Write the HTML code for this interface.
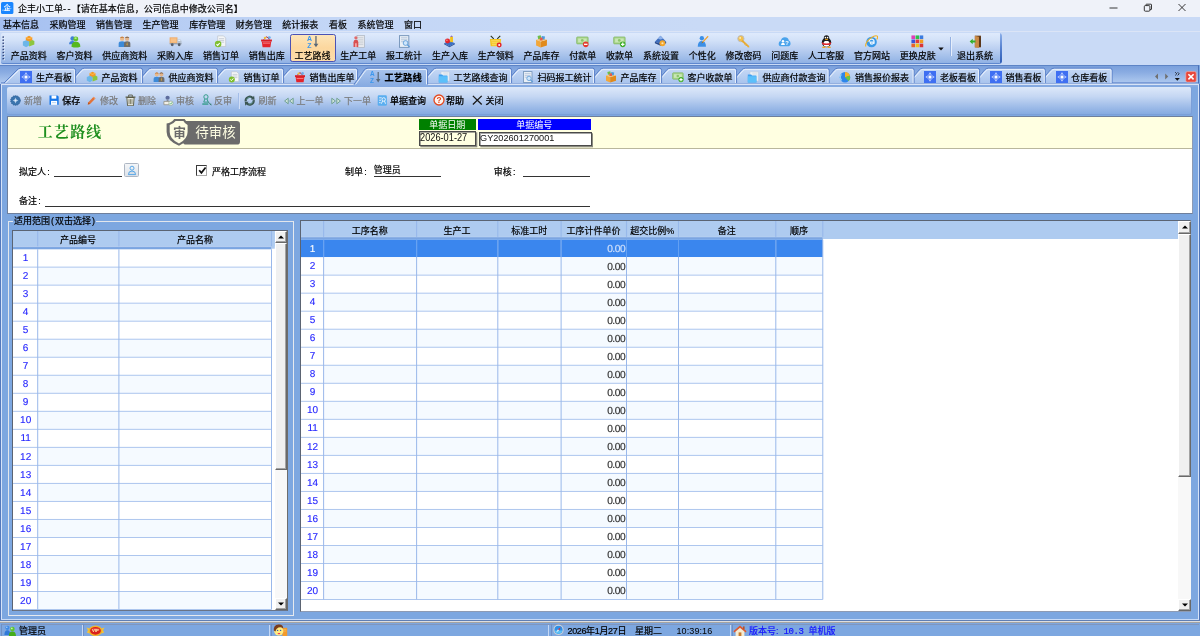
<!DOCTYPE html>
<html lang="zh-CN"><head><meta charset="utf-8"><title>企丰小工单</title>
<style>
*{box-sizing:border-box;margin:0;padding:0}
html,body{width:1200px;height:636px;overflow:hidden}
body{will-change:transform}
body{position:relative;background:#7da7e0;font:9px/11px 'Liberation Sans','Noto Sans CJK SC',sans-serif;color:#000}
.a{position:absolute}
.t{position:absolute;white-space:nowrap;line-height:11px}
.t,.tbi{-webkit-text-stroke:0.2px currentColor}
#title{left:0;top:0;width:1200px;height:17px;background:#eff2f9}
#menu{left:0;top:16.8px;width:1200px;height:15px;background:linear-gradient(to right,#a4bff0 0,#b4cbf3 140px,#c3d6f6 330px,#c9daf6 700px)}
#tbrow{left:0;top:31px;width:1200px;height:34px;background:#c9daf6;border-top:1px solid #dbe4f6}
#tb{left:1px;top:32.6px;width:1000.8px;height:31px;border-radius:2px 3px 3px 2px;background:linear-gradient(#dfeafc 0%,#d2e1f8 25%,#bcd0f1 52%,#a4c0ea 78%,#90b1e4 100%);border-bottom:1.2px solid #5f88cf;overflow:hidden}
#tb:after{content:'';position:absolute;right:0;top:0;width:1.8px;height:100%;background:linear-gradient(#8db0ea,#5580cf 50%,#2f5db6)}
.tbi{position:absolute;top:50.6px;text-align:center;white-space:nowrap;line-height:11px}
#tabrow{left:0;top:65px;width:1199px;height:19px;background:linear-gradient(#7aa0dc 0%,#8aace2 35%,#a3c0eb 75%,#b0c9ef 100%);border-top:1px solid #5d84c6;border-right:1px solid #4a70b8}
#acttb{left:6.6px;top:86.5px;width:1185px;height:28.2px;border-right:1px solid #7b9fd8;border-bottom:1px solid #7b9fd8;background:linear-gradient(#dde8f9 0%,#c5d7f3 35%,#9dbbe8 75%,#86abe1 100%);border-radius:2px}
.dis{color:#7a7a7a;font-weight:normal}
.en{color:#000;font-weight:500}
.gh{position:absolute;background:#aecbf0;border-right:1px solid #9dbbe8;text-align:center;line-height:17px;height:17px}
.gc{position:absolute;border-right:1px solid #a9c3ea;border-bottom:1px solid #a9c3ea}
.rn{color:#2a2aff;text-align:center;font-size:9.5px}
</style></head><body>

<div class="a" id="title"></div>
<svg class="a" style="left:1.3px;top:2px" width="12.4" height="12" viewBox="0 0 12.4 12"><rect x="0" y="0" width="12.4" height="12" rx="1.6" fill="#1a86ff"/><text x="6.2" y="8.2" font-size="6.8" font-weight="bold" text-anchor="middle" fill="#fff" font-family="'Liberation Sans','Noto Sans CJK SC',sans-serif">企</text><path d="M1 8.2Q5 9 10.4 6.4" stroke="#d6eaff" stroke-width="0.6" fill="none"/></svg>
<div class="t" style="left:18px;top:4px;font-size:9px">企丰小工单<span style="letter-spacing:1.4px">--</span>【请在基本信息，公司信息中修改公司名】</div>
<svg class="a" style="left:1100px;top:0" width="100" height="17" viewBox="0 0 100 17"><path d="M9.5 8H17.5" stroke="#222" stroke-width="0.9"/><rect x="44.3" y="5.6" width="5.6" height="5.6" rx="1" fill="none" stroke="#222" stroke-width="0.9"/><path d="M46 5.6V4.6Q46 4.2 46.5 4.2H51Q51.5 4.2 51.5 4.7V9Q51.5 9.6 51 9.6H50" fill="none" stroke="#222" stroke-width="0.9"/><path d="M78.5 4L85.5 11M85.5 4L78.5 11" stroke="#222" stroke-width="0.9"/></svg>
<div class="a" id="menu"></div>
<div class="t" style="left:3.0px;top:20px">基本信息</div>
<div class="t" style="left:49.5px;top:20px">采购管理</div>
<div class="t" style="left:96.1px;top:20px">销售管理</div>
<div class="t" style="left:142.6px;top:20px">生产管理</div>
<div class="t" style="left:189.2px;top:20px">库存管理</div>
<div class="t" style="left:235.8px;top:20px">财务管理</div>
<div class="t" style="left:282.3px;top:20px">统计报表</div>
<div class="t" style="left:328.9px;top:20px">看板</div>
<div class="t" style="left:357.4px;top:20px">系统管理</div>
<div class="t" style="left:404.0px;top:20px">窗口</div>
<div class="a" id="tbrow"></div><div class="a" id="tb"></div>
<svg class="a" style="left:2.4px;top:35.6px" width="4" height="25" viewBox="0 0 4 25"><rect x="0.5" y="0.40" width="1.5" height="1.5" fill="#2b3f77"/><rect x="1.6" y="1.50" width="1.1" height="1.1" fill="#f4f8fe"/><rect x="0.5" y="3.49" width="1.5" height="1.5" fill="#2b3f77"/><rect x="1.6" y="4.59" width="1.1" height="1.1" fill="#f4f8fe"/><rect x="0.5" y="6.58" width="1.5" height="1.5" fill="#2b3f77"/><rect x="1.6" y="7.68" width="1.1" height="1.1" fill="#f4f8fe"/><rect x="0.5" y="9.67" width="1.5" height="1.5" fill="#2b3f77"/><rect x="1.6" y="10.77" width="1.1" height="1.1" fill="#f4f8fe"/><rect x="0.5" y="12.76" width="1.5" height="1.5" fill="#2b3f77"/><rect x="1.6" y="13.86" width="1.1" height="1.1" fill="#f4f8fe"/><rect x="0.5" y="15.85" width="1.5" height="1.5" fill="#2b3f77"/><rect x="1.6" y="16.95" width="1.1" height="1.1" fill="#f4f8fe"/><rect x="0.5" y="18.94" width="1.5" height="1.5" fill="#2b3f77"/><rect x="1.6" y="20.04" width="1.1" height="1.1" fill="#f4f8fe"/><rect x="0.5" y="22.03" width="1.5" height="1.5" fill="#2b3f77"/><rect x="1.6" y="23.13" width="1.1" height="1.1" fill="#f4f8fe"/></svg>
<svg class="a" style="left:22.2px;top:35.3px" width="13" height="13" viewBox="0 0 12 12"><path d="M3.5 2.2L6.5 0.8L9.5 2.2V5L6.5 6.4L3.5 5Z" fill="#f59a23"/><path d="M3.5 2.2L6.5 3.4L9.5 2.2" stroke="#ffc56e" stroke-width=".7" fill="none"/><path d="M0.8 6L3.8 4.8L6.6 6V9.6L3.8 11.2L0.8 9.6Z" fill="#6cb6e8"/><path d="M6.6 6L9.4 4.6L11.4 5.6V8.8L6.6 10.5Z" fill="#8dc63f"/></svg>
<div class="tbi" style="left:5.8px;width:45.8px">产品资料</div>
<svg class="a" style="left:68.0px;top:35.3px" width="13" height="13" viewBox="0 0 12 12"><circle cx="4.2" cy="3.2" r="2" fill="#3f7fd6"/><path d="M1 8.5Q1 5.5 4.2 5.5Q7 5.5 7 8.5Z" fill="#3f7fd6"/><circle cx="7.2" cy="3.6" r="2.3" fill="#63c32a"/><path d="M3.2 10.8Q3.2 6.3 7.2 6.3Q11.4 6.3 11.4 10.8Q7.2 12.4 3.2 10.8Z" fill="#55b81f"/><ellipse cx="7" cy="2.8" rx="1.2" ry=".8" fill="#b7ec8d"/></svg>
<div class="tbi" style="left:51.6px;width:45.8px">客户资料</div>
<svg class="a" style="left:118.3px;top:35.3px" width="13" height="13" viewBox="0 0 12 12"><circle cx="3.8" cy="3.4" r="2" fill="#e9b98a"/><path d="M1.8 2.8Q3.8 0.4 5.8 2.8Q3.8 1.9 1.8 2.8Z" fill="#b3611c"/><path d="M0.6 11V8Q0.6 5.8 3.8 5.8Q6.8 5.8 6.8 8V11Z" fill="#3d8ad8"/><circle cx="8.4" cy="3.4" r="2" fill="#e2b38a"/><path d="M6.3 2.8Q8.4 0.2 10.5 2.8Q8.4 1.9 6.3 2.8Z" fill="#5a4633"/><path d="M5.6 11V8Q5.6 5.8 8.4 5.8Q11.4 5.8 11.4 8V11Z" fill="#6d6d6d"/><path d="M8.4 6L7.8 9L8.4 10L9 9Z" fill="#d9a33a"/></svg>
<div class="tbi" style="left:97.4px;width:54.8px">供应商资料</div>
<svg class="a" style="left:168.6px;top:35.3px" width="13" height="13" viewBox="0 0 12 12"><rect x="0.6" y="2.2" width="7.2" height="5.6" fill="#f0a862"/><rect x="1.4" y="3" width="5.6" height="4" fill="#f7c188"/><path d="M7.8 3.6H10L11.6 5.6V7.8H7.8Z" fill="#b7c3d2"/><path d="M8.5 4.2H9.8L10.8 5.6H8.5Z" fill="#e8f1fb"/><rect x="0.6" y="7.6" width="11" height="1" fill="#8c97a6"/><circle cx="3" cy="9" r="1.3" fill="#555e6c"/><circle cx="9.4" cy="9" r="1.3" fill="#555e6c"/></svg>
<div class="tbi" style="left:152.2px;width:45.8px">采购入库</div>
<svg class="a" style="left:214.4px;top:35.3px" width="13" height="13" viewBox="0 0 12 12"><path d="M3.4 0.8H8.8L10.8 2.8V10.6H3.4Z" fill="#f4f6f8" stroke="#b9c0c9" stroke-width=".6"/><path d="M4.6 3.4H9.4M4.6 5H9.4M4.6 6.6H9.4" stroke="#b4bac4" stroke-width=".6"/><circle cx="3.8" cy="8.4" r="3" fill="#7fbf2f"/><path d="M2.3 8.4L3.4 9.6L5.3 7.4" stroke="#fff" stroke-width="1" fill="none"/></svg>
<div class="tbi" style="left:198.0px;width:45.8px">销售订单</div>
<svg class="a" style="left:260.2px;top:35.3px" width="13" height="13" viewBox="0 0 12 12"><path d="M1 4.2H11V6H1Z" fill="#d81f26"/><path d="M1.6 6H10.4L9.6 11.2H2.4Z" fill="#e3242b"/><path d="M3.5 4.2Q6 -0.6 8.5 4.2" stroke="#b8161c" stroke-width=".9" fill="none"/><rect x="2.6" y="7" width="6.8" height="1" fill="#f7777b"/><circle cx="8.6" cy="2.4" r="1.3" fill="#6aa9e9"/><circle cx="4.6" cy="2.6" r="1.1" fill="#f3c13a"/></svg>
<div class="tbi" style="left:243.8px;width:45.8px">销售出库</div>
<div class="a" style="left:290.2px;top:33.9px;width:45.6px;height:28px;border:1.3px solid #4b52b4;border-radius:2.4px;background:linear-gradient(#fde5b9,#fcd79e 50%,#fddcab)"></div>
<svg class="a" style="left:306.0px;top:35.3px" width="13" height="13" viewBox="0 0 12 12"><text x="0.9" y="5.4" font-size="6.4" font-weight="bold" fill="#3a97ee" font-family="'Liberation Sans',sans-serif">A</text><text x="1.1" y="11.6" font-size="6.4" font-weight="bold" fill="#3a97ee" font-family="'Liberation Sans',sans-serif">Z</text><path d="M9.2 1V10" stroke="#596877" stroke-width="1.2"/><path d="M7 8L9.2 11.4L11.4 8Z" fill="#596877"/></svg>
<div class="tbi" style="left:289.6px;width:45.8px">工艺路线</div>
<svg class="a" style="left:351.8px;top:35.3px" width="13" height="13" viewBox="0 0 12 12"><rect x="4.6" y="0.6" width="6.8" height="10.8" fill="#e6e8ec" stroke="#aab1bb" stroke-width=".6"/><path d="M5.6 2.4H10.4M5.6 4H10.4M5.6 5.6H10.4M5.6 7.2H10.4M5.6 8.8H10.4" stroke="#b9bfc8" stroke-width=".5"/><circle cx="3.6" cy="2.6" r="1.5" fill="#e06b6b"/><path d="M1.4 11V6.6Q1.4 4.4 3.6 4.4Q5.8 4.4 5.8 6.6V11Z" fill="#d94f4f"/><rect x="2.8" y="7.6" width="1.6" height="3.4" fill="#f4a7a7"/></svg>
<div class="tbi" style="left:335.4px;width:45.8px">生产工单</div>
<svg class="a" style="left:397.6px;top:35.3px" width="13" height="13" viewBox="0 0 12 12"><rect x="1.4" y="0.6" width="8.6" height="10.8" fill="#e9eff6" stroke="#6e8fb6" stroke-width=".8"/><path d="M2.8 2.6H8.6M2.8 4.4H8.6M2.8 6.2H6" stroke="#9db4cf" stroke-width=".6"/><circle cx="7" cy="7.4" r="2.2" fill="#cfe6fb" stroke="#5c9bd8" stroke-width=".8"/><path d="M8.6 9L10.8 11.2" stroke="#5c9bd8" stroke-width="1.1"/></svg>
<div class="tbi" style="left:381.2px;width:45.8px">报工统计</div>
<svg class="a" style="left:443.4px;top:35.3px" width="13" height="13" viewBox="0 0 12 12"><path d="M1 7.6L6 5.4L11 7.6L6 10.4Z" fill="#3b6fc6"/><path d="M1 7.6V8.6L6 11.4L11 8.6V7.6L6 10.4Z" fill="#284f96"/><circle cx="4.2" cy="5.6" r="2.3" fill="#e4262c"/><rect x="6.6" y="1.6" width="2.6" height="5" fill="#f2c21b"/><path d="M6.6 1.6L7.9 0.4L9.2 1.6Z" fill="#7a4ab5"/><circle cx="3.6" cy="4.8" r=".7" fill="#f79a9d"/></svg>
<div class="tbi" style="left:427.0px;width:45.8px">生产入库</div>
<svg class="a" style="left:489.2px;top:35.3px" width="13" height="13" viewBox="0 0 12 12"><path d="M1.6 0.8L4.4 3.6M10.4 0.8L7.6 3.6" stroke="#27331f" stroke-width="1"/><path d="M0.8 3.8H11.2L10.4 10.4H1.6Z" fill="#f5c51d"/><path d="M2 5.4H10M2.4 7.2H9.6M2.8 9H9.2" stroke="#fbe48a" stroke-width=".7"/><circle cx="9.4" cy="9.2" r="2.3" fill="#e3262b"/><circle cx="9.4" cy="9.2" r=".9" fill="#fff"/></svg>
<div class="tbi" style="left:472.8px;width:45.8px">生产领料</div>
<svg class="a" style="left:535.0px;top:35.3px" width="13" height="13" viewBox="0 0 12 12"><path d="M1 4.4L5.2 6V11.6L1 9.8Z" fill="#f2a73a"/><path d="M5.2 6L11 4.4V9.8L5.2 11.6Z" fill="#e18a1b"/><path d="M1 4.4L6.4 3L11 4.4L5.2 6Z" fill="#f9c873"/><rect x="2.6" y="0.6" width="3" height="3" fill="#6cc04a" transform="rotate(-12 4 2)"/><rect x="6" y="1.2" width="3" height="3" fill="#4a9be0" transform="rotate(10 7.5 2.7)"/><rect x="4.4" y="2.4" width="2.6" height="2.6" fill="#e85b4a"/></svg>
<div class="tbi" style="left:518.6px;width:45.8px">产品库存</div>
<svg class="a" style="left:576.3px;top:35.3px" width="13" height="13" viewBox="0 0 12 12"><rect x="0.6" y="1.8" width="10.6" height="6.4" rx=".8" fill="#a7d48a" stroke="#78b158" stroke-width=".6"/><rect x="2" y="3.2" width="7.8" height="3.6" fill="#c9e7b5"/><circle cx="5.8" cy="5" r="1.3" fill="#8dc56c"/><circle cx="9" cy="8.6" r="2.6" fill="#e23a2e"/><rect x="7.4" y="8" width="3.2" height="1.2" fill="#fff"/></svg>
<div class="tbi" style="left:564.4px;width:36.8px">付款单</div>
<svg class="a" style="left:613.1px;top:35.3px" width="13" height="13" viewBox="0 0 12 12"><rect x="0.6" y="1.8" width="10.6" height="6.4" rx=".8" fill="#a7d48a" stroke="#78b158" stroke-width=".6"/><rect x="2" y="3.2" width="7.8" height="3.6" fill="#c9e7b5"/><circle cx="5.8" cy="5" r="1.3" fill="#8dc56c"/><circle cx="9" cy="8.6" r="2.6" fill="#3fae2a"/><path d="M7.4 8.6H10.6M9 7V10.2" stroke="#fff" stroke-width="1.1"/></svg>
<div class="tbi" style="left:601.2px;width:36.8px">收款单</div>
<svg class="a" style="left:654.4px;top:35.3px" width="13" height="13" viewBox="0 0 12 12"><path d="M6 0.8L11.2 6.2L6 8L0.8 6.2Z" fill="#3e6dbd"/><path d="M0.8 6.2L6 8L11.2 6.2V7.6L6 10L0.8 7.6Z" fill="#27488a"/><circle cx="7.8" cy="7.6" r="2.7" fill="#f3a62c"/><circle cx="7.8" cy="7.6" r="1" fill="#fbe3b3"/><path d="M6 0.8L8.4 3.4L6 4.2L3.6 3.4Z" fill="#8fb3ec"/></svg>
<div class="tbi" style="left:638.0px;width:45.8px">系统设置</div>
<svg class="a" style="left:695.7px;top:35.3px" width="13" height="13" viewBox="0 0 12 12"><circle cx="5.4" cy="3" r="2" fill="#3c8fe6"/><path d="M1.6 10.8Q1.6 5.6 5.4 5.6Q9.2 5.6 9.2 10.8Z" fill="#3c8fe6"/><path d="M10.8 0.8L11.6 1.6L6.4 7.2L5.2 7.6L5.6 6.4Z" fill="#f0a02c"/><path d="M5.2 7.6L5.6 6.4L6.4 7.2Z" fill="#5a4633"/></svg>
<div class="tbi" style="left:683.8px;width:36.8px">个性化</div>
<svg class="a" style="left:737.0px;top:35.3px" width="13" height="13" viewBox="0 0 12 12"><circle cx="3.6" cy="3.4" r="2.9" fill="#f3c04a" stroke="#b9bcc4" stroke-width=".9"/><circle cx="2.9" cy="2.7" r=".8" fill="#fdf0c8"/><path d="M5.2 4.4L11.2 10.2L11.4 11.6L9.8 11.4L9.2 10.2L8 10.2L7.8 9L6.6 8.8L6.2 7.6L3.8 6Z" fill="#e7ab35"/></svg>
<div class="tbi" style="left:720.6px;width:45.8px">修改密码</div>
<svg class="a" style="left:778.3px;top:35.3px" width="13" height="13" viewBox="0 0 12 12"><path d="M3 10.4Q0.6 10.4 0.6 8Q0.6 6 2.6 5.6Q3 2 6.4 2Q9.4 2 10 5Q11.6 5.6 11.6 7.8Q11.6 10.4 9 10.4Z" fill="#4aa3ec"/><circle cx="4.6" cy="5.8" r="1.1" fill="#fff"/><path d="M2.8 9.2Q2.8 7.2 4.6 7.2Q6.4 7.2 6.4 9.2Z" fill="#fff"/><text x="6.6" y="9.2" font-size="5.4" font-weight="bold" fill="#fff" font-family="'Liberation Sans',sans-serif">?</text></svg>
<div class="tbi" style="left:766.4px;width:36.8px">问题库</div>
<svg class="a" style="left:819.6px;top:35.3px" width="13" height="13" viewBox="0 0 12 12"><ellipse cx="6" cy="6.8" rx="4.3" ry="4.4" fill="#1c1c1c"/><ellipse cx="6" cy="8" rx="2.8" ry="2.8" fill="#fff"/><circle cx="6" cy="2.8" r="2.5" fill="#1c1c1c"/><ellipse cx="5" cy="2.4" rx=".7" ry=".9" fill="#fff"/><ellipse cx="7" cy="2.4" rx=".7" ry=".9" fill="#fff"/><ellipse cx="6" cy="4" rx="1.5" ry=".6" fill="#f4a516"/><path d="M1.8 6.6Q6 9 10.2 6.6L10.2 8.2Q6 10.4 1.8 8.2Z" fill="#e0252b"/><ellipse cx="3.6" cy="11.2" rx="1.8" ry=".7" fill="#f4a516"/><ellipse cx="8.4" cy="11.2" rx="1.8" ry=".7" fill="#f4a516"/></svg>
<div class="tbi" style="left:803.2px;width:45.8px">人工客服</div>
<svg class="a" style="left:865.4px;top:35.3px" width="13" height="13" viewBox="0 0 12 12"><circle cx="6" cy="6.4" r="4.9" fill="#3a9ae8"/><path d="M3.6 6.2Q3.8 3.8 6 3.8Q8.4 3.8 8.4 6.6H4.8Q5 8.4 6.2 8.4Q7.2 8.4 7.6 7.6H8.8" fill="none" stroke="#e8f4ff" stroke-width="1.2"/><path d="M0.8 10.6Q-0.4 7 5.6 2.6Q9.6 -0.2 11.4 1Q12.2 2 10.8 4.2" fill="none" stroke="#f2b01c" stroke-width="1"/></svg>
<div class="tbi" style="left:849.0px;width:45.8px">官方网站</div>
<svg class="a" style="left:911.2px;top:35.3px" width="13" height="13" viewBox="0 0 12 12"><rect x="0.4" y="0.4" width="3.3" height="3.3" fill="#e03cb8"/><rect x="4.2" y="0.4" width="3.3" height="3.3" fill="#2dbf4a"/><rect x="8.0" y="0.4" width="3.3" height="3.3" fill="#3b7be0"/><rect x="0.4" y="4.2" width="3.3" height="3.3" fill="#3b56d8"/><rect x="4.2" y="4.2" width="3.3" height="3.3" fill="#e03a3a"/><rect x="8.0" y="4.2" width="3.3" height="3.3" fill="#f29b1d"/><rect x="0.4" y="8.0" width="3.3" height="3.3" fill="#e8632c"/><rect x="4.2" y="8.0" width="3.3" height="3.3" fill="#f2c21d"/><rect x="8.0" y="8.0" width="3.3" height="3.3" fill="#d93535"/></svg>
<div class="tbi" style="left:894.8px;width:45.8px">更换皮肤</div>
<svg class="a" style="left:938px;top:47px" width="6" height="4" viewBox="0 0 6 4"><path d="M0.3 0.5H5.7L3 3.6Z" fill="#111"/></svg>
<div class="a" style="left:949.5px;top:37px;width:1px;height:19px;background:#94b1e2"></div><div class="a" style="left:950.5px;top:37px;width:1px;height:19px;background:#e6eefb"></div>
<svg class="a" style="left:968.5px;top:35.3px" width="13" height="13" viewBox="0 0 12 12"><path d="M5.4 0.6H11V11.4H5.4Z" fill="#7a4a22"/><path d="M5.4 0.6L9.2 1.8V12L5.4 11.4Z" fill="#c98a45"/><rect x="9.6" y="1.2" width="1.2" height="9.8" fill="#4b2c12"/><path d="M0.6 6L3.4 3.4V5H6V7H3.4V8.6Z" fill="#36b02a"/></svg>
<div class="tbi" style="left:952px;width:46px">退出系统</div>
<div class="a" id="tabrow"></div>
<svg class="a" style="left:0;top:65px" width="1200" height="22" viewBox="0 65 1200 22"><defs><linearGradient id="tg" x1="0" y1="0" x2="0" y2="1"><stop offset="0" stop-color="#c6d9f6"/><stop offset="1" stop-color="#a9c4ed"/></linearGradient><linearGradient id="tga" x1="0" y1="0" x2="0" y2="1"><stop offset="0" stop-color="#abc6ee"/><stop offset="1" stop-color="#86aae1"/></linearGradient></defs><rect x="1" y="83.6" width="1198" height="3.2" fill="#86aae1"/><path d="M1 83H1199" stroke="#4a72c0" stroke-width="1"/><path d="M1 84.2H1199" stroke="#f2f6fd" stroke-width="1.1"/><path d="M1039.2 83.0 L1050.3 70 Q1051.7 68.2 1054.1 68.2 L1110.3 68.2 Q1112.1 68.2 1112.1 70.4 L1112.1 83.0" fill="url(#tg)" stroke="#5078c4" stroke-width="0.9"/><path d="M1040.8 83.0 L1051.5 70.9 Q1052.5 69.4 1054.5 69.4 L1109.7 69.4 Q1111.0 69.4 1111.0 71 L1111.0 83.0" fill="none" stroke="#eef4fd" stroke-width="0.85"/><path d="M973.5 83.0 L984.6 70 Q986.0 68.2 988.4 68.2 L1043.5 68.2 Q1045.3 68.2 1045.3 70.4 L1045.3 83.0" fill="url(#tg)" stroke="#5078c4" stroke-width="0.9"/><path d="M975.1 83.0 L985.8 70.9 Q986.8 69.4 988.8 69.4 L1042.9 69.4 Q1044.2 69.4 1044.2 71 L1044.2 83.0" fill="none" stroke="#eef4fd" stroke-width="0.85"/><path d="M908.0 83.0 L919.1 70 Q920.5 68.2 922.9 68.2 L977.8 68.2 Q979.6 68.2 979.6 70.4 L979.6 83.0" fill="url(#tg)" stroke="#5078c4" stroke-width="0.9"/><path d="M909.6 83.0 L920.3 70.9 Q921.3 69.4 923.3 69.4 L977.2 69.4 Q978.5 69.4 978.5 71 L978.5 83.0" fill="none" stroke="#eef4fd" stroke-width="0.85"/><path d="M823.0 83.0 L834.1 70 Q835.5 68.2 837.9 68.2 L912.3 68.2 Q914.1 68.2 914.1 70.4 L914.1 83.0" fill="url(#tg)" stroke="#5078c4" stroke-width="0.9"/><path d="M824.6 83.0 L835.3 70.9 Q836.3 69.4 838.3 69.4 L911.7 69.4 Q913.0 69.4 913.0 71 L913.0 83.0" fill="none" stroke="#eef4fd" stroke-width="0.85"/><path d="M730.5 83.0 L741.6 70 Q743.0 68.2 745.4 68.2 L827.3 68.2 Q829.1 68.2 829.1 70.4 L829.1 83.0" fill="url(#tg)" stroke="#5078c4" stroke-width="0.9"/><path d="M732.1 83.0 L742.8 70.9 Q743.8 69.4 745.8 69.4 L826.7 69.4 Q828.0 69.4 828.0 71 L828.0 83.0" fill="none" stroke="#eef4fd" stroke-width="0.85"/><path d="M655.5 83.0 L666.6 70 Q668.0 68.2 670.4 68.2 L734.8 68.2 Q736.6 68.2 736.6 70.4 L736.6 83.0" fill="url(#tg)" stroke="#5078c4" stroke-width="0.9"/><path d="M657.1 83.0 L667.8 70.9 Q668.8 69.4 670.8 69.4 L734.2 69.4 Q735.5 69.4 735.5 71 L735.5 83.0" fill="none" stroke="#eef4fd" stroke-width="0.85"/><path d="M588.5 83.0 L599.6 70 Q601.0 68.2 603.4 68.2 L659.8 68.2 Q661.6 68.2 661.6 70.4 L661.6 83.0" fill="url(#tg)" stroke="#5078c4" stroke-width="0.9"/><path d="M590.1 83.0 L600.8 70.9 Q601.8 69.4 603.8 69.4 L659.2 69.4 Q660.5 69.4 660.5 71 L660.5 83.0" fill="none" stroke="#eef4fd" stroke-width="0.85"/><path d="M505.5 83.0 L516.6 70 Q518.0 68.2 520.4 68.2 L592.8 68.2 Q594.6 68.2 594.6 70.4 L594.6 83.0" fill="url(#tg)" stroke="#5078c4" stroke-width="0.9"/><path d="M507.1 83.0 L517.8 70.9 Q518.8 69.4 520.8 69.4 L592.2 69.4 Q593.5 69.4 593.5 71 L593.5 83.0" fill="none" stroke="#eef4fd" stroke-width="0.85"/><path d="M421.5 83.0 L432.6 70 Q434.0 68.2 436.4 68.2 L509.8 68.2 Q511.6 68.2 511.6 70.4 L511.6 83.0" fill="url(#tg)" stroke="#5078c4" stroke-width="0.9"/><path d="M423.1 83.0 L433.8 70.9 Q434.8 69.4 436.8 69.4 L509.2 69.4 Q510.5 69.4 510.5 71 L510.5 83.0" fill="none" stroke="#eef4fd" stroke-width="0.85"/><path d="M277.5 83.0 L288.6 70 Q290.0 68.2 292.4 68.2 L355.8 68.2 Q357.6 68.2 357.6 70.4 L357.6 83.0" fill="url(#tg)" stroke="#5078c4" stroke-width="0.9"/><path d="M279.1 83.0 L289.8 70.9 Q290.8 69.4 292.8 69.4 L355.2 69.4 Q356.5 69.4 356.5 71 L356.5 83.0" fill="none" stroke="#eef4fd" stroke-width="0.85"/><path d="M211.5 83.0 L222.6 70 Q224.0 68.2 226.4 68.2 L281.8 68.2 Q283.6 68.2 283.6 70.4 L283.6 83.0" fill="url(#tg)" stroke="#5078c4" stroke-width="0.9"/><path d="M213.1 83.0 L223.8 70.9 Q224.8 69.4 226.8 69.4 L281.2 69.4 Q282.5 69.4 282.5 71 L282.5 83.0" fill="none" stroke="#eef4fd" stroke-width="0.85"/><path d="M136.5 83.0 L147.6 70 Q149.0 68.2 151.4 68.2 L215.8 68.2 Q217.6 68.2 217.6 70.4 L217.6 83.0" fill="url(#tg)" stroke="#5078c4" stroke-width="0.9"/><path d="M138.1 83.0 L148.8 70.9 Q149.8 69.4 151.8 69.4 L215.2 69.4 Q216.5 69.4 216.5 71 L216.5 83.0" fill="none" stroke="#eef4fd" stroke-width="0.85"/><path d="M69.5 83.0 L80.6 70 Q82.0 68.2 84.4 68.2 L140.8 68.2 Q142.6 68.2 142.6 70.4 L142.6 83.0" fill="url(#tg)" stroke="#5078c4" stroke-width="0.9"/><path d="M71.1 83.0 L81.8 70.9 Q82.8 69.4 84.8 69.4 L140.2 69.4 Q141.5 69.4 141.5 71 L141.5 83.0" fill="none" stroke="#eef4fd" stroke-width="0.85"/><path d="M4.0 83.0 L17.0 70 Q18.4 68.2 20.8 68.2 L73.8 68.2 Q75.6 68.2 75.6 70.4 L75.6 83.0" fill="url(#tg)" stroke="#5078c4" stroke-width="0.9"/><path d="M5.6 83.0 L18.2 70.9 Q19.2 69.4 21.2 69.4 L73.2 69.4 Q74.5 69.4 74.5 71 L74.5 83.0" fill="none" stroke="#eef4fd" stroke-width="0.85"/><path d="M354.0 84.4 L364.1 70 Q365.5 68.2 367.9 68.2 L425.8 68.2 Q427.6 68.2 427.6 70.4 L427.6 84.4 L427.6 86.8 L352.0 86.8 Z" fill="url(#tga)" stroke="none"/><path d="M354.0 84.4 L364.1 70 Q365.5 68.2 367.9 68.2 L425.8 68.2 Q427.6 68.2 427.6 70.4 L427.6 84.4" fill="none" stroke="#5078c4" stroke-width="0.9"/><path d="M355.6 84.4 L365.3 70.9 Q366.3 69.4 368.3 69.4 L425.2 69.4 Q426.5 69.4 426.5 71 L426.5 84.4" fill="none" stroke="#f1f6fd" stroke-width="0.9"/></svg>
<svg class="a" style="left:20.0px;top:70.5px" width="12" height="12" viewBox="0 0 12 12"><rect x="0" y="0" width="12" height="12" fill="#3f6ff2"/><path d="M6 2.4L9.6 6L6 9.6L2.4 6Z" fill="#6f93f6" stroke="#a9c0fb" stroke-width=".7"/><circle cx="6" cy="6" r="1.5" fill="#fff"/><circle cx="6" cy="2.4" r=".8" fill="#c4d4fd"/><circle cx="6" cy="9.6" r=".8" fill="#c4d4fd"/><circle cx="2.4" cy="6" r=".8" fill="#c4d4fd"/><circle cx="9.6" cy="6" r=".8" fill="#c4d4fd"/></svg>
<div class="t" style="left:36.0px;top:72.9px;">生产看板</div>
<svg class="a" style="left:85.8px;top:70.5px" width="12" height="12" viewBox="0 0 12 12"><path d="M3.5 2.2L6.5 0.8L9.5 2.2V5L6.5 6.4L3.5 5Z" fill="#f59a23"/><path d="M3.5 2.2L6.5 3.4L9.5 2.2" stroke="#ffc56e" stroke-width=".7" fill="none"/><path d="M0.8 6L3.8 4.8L6.6 6V9.6L3.8 11.2L0.8 9.6Z" fill="#6cb6e8"/><path d="M6.6 6L9.4 4.6L11.4 5.6V8.8L6.6 10.5Z" fill="#8dc63f"/></svg>
<div class="t" style="left:101.5px;top:72.9px;">产品资料</div>
<svg class="a" style="left:152.8px;top:70.5px" width="12" height="12" viewBox="0 0 12 12"><circle cx="3.8" cy="3.4" r="2" fill="#e9b98a"/><path d="M1.8 2.8Q3.8 0.4 5.8 2.8Q3.8 1.9 1.8 2.8Z" fill="#b3611c"/><path d="M0.6 11V8Q0.6 5.8 3.8 5.8Q6.8 5.8 6.8 8V11Z" fill="#3d8ad8"/><circle cx="8.4" cy="3.4" r="2" fill="#e2b38a"/><path d="M6.3 2.8Q8.4 0.2 10.5 2.8Q8.4 1.9 6.3 2.8Z" fill="#5a4633"/><path d="M5.6 11V8Q5.6 5.8 8.4 5.8Q11.4 5.8 11.4 8V11Z" fill="#6d6d6d"/><path d="M8.4 6L7.8 9L8.4 10L9 9Z" fill="#d9a33a"/></svg>
<div class="t" style="left:168.5px;top:72.9px;">供应商资料</div>
<svg class="a" style="left:227.8px;top:70.5px" width="12" height="12" viewBox="0 0 12 12"><path d="M3.4 0.8H8.8L10.8 2.8V10.6H3.4Z" fill="#f4f6f8" stroke="#b9c0c9" stroke-width=".6"/><path d="M4.6 3.4H9.4M4.6 5H9.4M4.6 6.6H9.4" stroke="#b4bac4" stroke-width=".6"/><circle cx="3.8" cy="8.4" r="3" fill="#7fbf2f"/><path d="M2.3 8.4L3.4 9.6L5.3 7.4" stroke="#fff" stroke-width="1" fill="none"/></svg>
<div class="t" style="left:243.5px;top:72.9px;">销售订单</div>
<svg class="a" style="left:293.8px;top:70.5px" width="12" height="12" viewBox="0 0 12 12"><path d="M1 4.2H11V6H1Z" fill="#d81f26"/><path d="M1.6 6H10.4L9.6 11.2H2.4Z" fill="#e3242b"/><path d="M3.5 4.2Q6 -0.6 8.5 4.2" stroke="#b8161c" stroke-width=".9" fill="none"/><rect x="2.6" y="7" width="6.8" height="1" fill="#f7777b"/><circle cx="8.6" cy="2.4" r="1.3" fill="#6aa9e9"/><circle cx="4.6" cy="2.6" r="1.1" fill="#f3c13a"/></svg>
<div class="t" style="left:309.5px;top:72.9px;">销售出库单</div>
<svg class="a" style="left:368.8px;top:70.5px" width="12" height="12" viewBox="0 0 12 12"><text x="0.9" y="5.4" font-size="6.4" font-weight="bold" fill="#3a97ee" font-family="'Liberation Sans',sans-serif">A</text><text x="1.1" y="11.6" font-size="6.4" font-weight="bold" fill="#3a97ee" font-family="'Liberation Sans',sans-serif">Z</text><path d="M9.2 1V10" stroke="#596877" stroke-width="1.2"/><path d="M7 8L9.2 11.4L11.4 8Z" fill="#596877"/></svg>
<div class="t" style="left:384.5px;top:72.9px;font-weight:bold;font-size:9.3px;">工艺路线</div>
<svg class="a" style="left:437.8px;top:70.5px" width="12" height="12" viewBox="0 0 12 12"><path d="M3 0.8H11.2V10H3Z" fill="#eef2f7" stroke="#c2cad6" stroke-width=".5"/><path d="M5.4 2H10M5.4 3.2H10" stroke="#c5ccd6" stroke-width=".5"/><path d="M0.8 3.4H4.2L5 4.4H9.4V11.4H0.8Z" fill="#3fa0ef"/><path d="M0.8 5.2H9.4V11.4H0.8Z" fill="#5cc0fa"/></svg>
<div class="t" style="left:453.5px;top:72.9px;">工艺路线查询</div>
<svg class="a" style="left:521.8px;top:70.5px" width="12" height="12" viewBox="0 0 12 12"><rect x="1.4" y="0.6" width="8.6" height="10.8" fill="#e9eff6" stroke="#6e8fb6" stroke-width=".8"/><path d="M2.8 2.6H8.6M2.8 4.4H8.6M2.8 6.2H6" stroke="#9db4cf" stroke-width=".6"/><circle cx="7" cy="7.4" r="2.2" fill="#cfe6fb" stroke="#5c9bd8" stroke-width=".8"/><path d="M8.6 9L10.8 11.2" stroke="#5c9bd8" stroke-width="1.1"/></svg>
<div class="t" style="left:537.5px;top:72.9px;">扫码报工统计</div>
<svg class="a" style="left:604.8px;top:70.5px" width="12" height="12" viewBox="0 0 12 12"><path d="M1 4.4L5.2 6V11.6L1 9.8Z" fill="#f2a73a"/><path d="M5.2 6L11 4.4V9.8L5.2 11.6Z" fill="#e18a1b"/><path d="M1 4.4L6.4 3L11 4.4L5.2 6Z" fill="#f9c873"/><rect x="2.6" y="0.6" width="3" height="3" fill="#6cc04a" transform="rotate(-12 4 2)"/><rect x="6" y="1.2" width="3" height="3" fill="#4a9be0" transform="rotate(10 7.5 2.7)"/><rect x="4.4" y="2.4" width="2.6" height="2.6" fill="#e85b4a"/></svg>
<div class="t" style="left:620.5px;top:72.9px;">产品库存</div>
<svg class="a" style="left:671.8px;top:70.5px" width="12" height="12" viewBox="0 0 12 12"><rect x="0.6" y="1.8" width="10.6" height="6.4" rx=".8" fill="#a7d48a" stroke="#78b158" stroke-width=".6"/><rect x="2" y="3.2" width="7.8" height="3.6" fill="#c9e7b5"/><circle cx="5.8" cy="5" r="1.3" fill="#8dc56c"/><circle cx="9" cy="8.6" r="2.6" fill="#3fae2a"/><path d="M7.4 8.6H10.6M9 7V10.2" stroke="#fff" stroke-width="1.1"/></svg>
<div class="t" style="left:687.5px;top:72.9px;">客户收款单</div>
<svg class="a" style="left:746.8px;top:70.5px" width="12" height="12" viewBox="0 0 12 12"><path d="M3 0.8H11.2V10H3Z" fill="#eef2f7" stroke="#c2cad6" stroke-width=".5"/><path d="M5.4 2H10M5.4 3.2H10" stroke="#c5ccd6" stroke-width=".5"/><path d="M0.8 3.4H4.2L5 4.4H9.4V11.4H0.8Z" fill="#3fa0ef"/><path d="M0.8 5.2H9.4V11.4H0.8Z" fill="#5cc0fa"/></svg>
<div class="t" style="left:762.5px;top:72.9px;">供应商付款查询</div>
<svg class="a" style="left:839.3px;top:70.5px" width="12" height="12" viewBox="0 0 12 12"><circle cx="6" cy="6.2" r="5.2" fill="#2f86ea"/><path d="M6 6.2V1A5.2 5.2 0 0 1 11 4.8Z" fill="#f6b22a"/><path d="M6 6.2L11 4.8A5.2 5.2 0 0 1 9.6 10Z" fill="#6cc83c"/><path d="M2.4 3.4A4.6 4.6 0 0 0 2.6 9.4" fill="none" stroke="#8fd0fb" stroke-width="1.3"/></svg>
<div class="t" style="left:855.0px;top:72.9px;">销售报价报表</div>
<svg class="a" style="left:924.3px;top:70.5px" width="12" height="12" viewBox="0 0 12 12"><rect x="0" y="0" width="12" height="12" fill="#3f6ff2"/><path d="M6 2.4L9.6 6L6 9.6L2.4 6Z" fill="#6f93f6" stroke="#a9c0fb" stroke-width=".7"/><circle cx="6" cy="6" r="1.5" fill="#fff"/><circle cx="6" cy="2.4" r=".8" fill="#c4d4fd"/><circle cx="6" cy="9.6" r=".8" fill="#c4d4fd"/><circle cx="2.4" cy="6" r=".8" fill="#c4d4fd"/><circle cx="9.6" cy="6" r=".8" fill="#c4d4fd"/></svg>
<div class="t" style="left:940.0px;top:72.9px;">老板看板</div>
<svg class="a" style="left:989.8px;top:70.5px" width="12" height="12" viewBox="0 0 12 12"><rect x="0" y="0" width="12" height="12" fill="#3f6ff2"/><path d="M6 2.4L9.6 6L6 9.6L2.4 6Z" fill="#6f93f6" stroke="#a9c0fb" stroke-width=".7"/><circle cx="6" cy="6" r="1.5" fill="#fff"/><circle cx="6" cy="2.4" r=".8" fill="#c4d4fd"/><circle cx="6" cy="9.6" r=".8" fill="#c4d4fd"/><circle cx="2.4" cy="6" r=".8" fill="#c4d4fd"/><circle cx="9.6" cy="6" r=".8" fill="#c4d4fd"/></svg>
<div class="t" style="left:1005.5px;top:72.9px;">销售看板</div>
<svg class="a" style="left:1055.5px;top:70.5px" width="12" height="12" viewBox="0 0 12 12"><rect x="0" y="0" width="12" height="12" fill="#3f6ff2"/><path d="M6 2.4L9.6 6L6 9.6L2.4 6Z" fill="#6f93f6" stroke="#a9c0fb" stroke-width=".7"/><circle cx="6" cy="6" r="1.5" fill="#fff"/><circle cx="6" cy="2.4" r=".8" fill="#c4d4fd"/><circle cx="6" cy="9.6" r=".8" fill="#c4d4fd"/><circle cx="2.4" cy="6" r=".8" fill="#c4d4fd"/><circle cx="9.6" cy="6" r=".8" fill="#c4d4fd"/></svg>
<div class="t" style="left:1071.2px;top:72.9px;">仓库看板</div>
<svg class="a" style="left:1150px;top:69px" width="50" height="15" viewBox="0 0 50 15"><path d="M8 4.6V10.6L5 7.6Z" fill="#707070"/><path d="M15.2 4.6V10.6L18.2 7.6Z" fill="#707070"/><path d="M25.2 3.2L26.8 4.8L25.2 6.4M27.6 3.2L29.2 4.8L27.6 6.4" stroke="#111" stroke-width=".8" fill="none"/><path d="M24.8 9H29.8L27.3 11.8Z" fill="#111"/><rect x="35.8" y="2.6" width="10.4" height="10.4" rx="1.5" fill="#e8463a" stroke="#f7b0a8" stroke-width=".6"/><path d="M38.4 5.2L43.6 10.4M43.6 5.2L38.4 10.4" stroke="#fff" stroke-width="1.6"/></svg>
<div class="a" style="left:0;top:84px;width:1px;height:552px;background:#5379bd"></div><div class="a" style="left:1px;top:84.6px;width:1px;height:535px;background:#d6e3f8"></div>
<div class="a" style="left:1198px;top:84.6px;width:1px;height:535px;background:#d6e3f8"></div><div class="a" style="left:1199px;top:84px;width:1px;height:537px;background:#4f74b8"></div>
<div class="a" style="left:1px;top:619px;width:1198px;height:1px;background:#c9dbf7"></div><div class="a" style="left:0;top:620px;width:1200px;height:1.1px;background:#5f7fb5"></div>
<div class="a" id="acttb"></div>
<svg class="a" style="left:10.0px;top:95.3px" width="11.0" height="11.0" viewBox="0 0 12 12" preserveAspectRatio="none"><circle cx="6" cy="6" r="5.3" fill="#3b74ad"/><circle cx="6" cy="6" r="5.3" fill="none" stroke="#2a5b92" stroke-width=".9" stroke-dasharray="1.3 1.1"/><path d="M6 2.8L7 5L9.2 6L7 7L6 9.2L5 7L2.8 6L5 5Z" fill="#a9c6e6"/><circle cx="6" cy="6" r="1" fill="#e8f1fb"/></svg>
<div class="t dis" style="left:24.0px;top:95.7px;">新增</div>
<svg class="a" style="left:48.8px;top:95.4px" width="10.2" height="10.4" viewBox="0 0 12 12" preserveAspectRatio="none"><path d="M0.6 0.6H10L11.4 2V11.4H0.6Z" fill="#1777ea"/><rect x="3" y="0.6" width="5.6" height="3.6" fill="#fff"/><rect x="2.4" y="6.8" width="7.2" height="4.6" fill="#fff"/><rect x="3.6" y="8.4" width="4.8" height="1" fill="#a8ccf5"/></svg>
<div class="t en" style="left:62.3px;top:95.7px;">保存</div>
<svg class="a" style="left:87.2px;top:95.8px" width="9.2" height="9.2" viewBox="0 0 12 12" preserveAspectRatio="none"><path d="M8.6 1L11 3.4L4 10.4L1 11.2L1.8 8.2Z" fill="#e2733a"/><path d="M1 11.2L1.8 8.2L4 10.4Z" fill="#b5531f"/><path d="M8.6 1L11 3.4L10.2 4.2L7.8 1.8Z" fill="#ee9a68"/></svg>
<div class="t dis" style="left:100.0px;top:95.7px;">修改</div>
<svg class="a" style="left:125.0px;top:93.6px" width="11.0" height="12.4" viewBox="0 0 12 12" preserveAspectRatio="none"><path d="M2 3.4H10L9.2 11.4H2.8Z" fill="#e6e8e0" stroke="#57573f" stroke-width=".9"/><path d="M0.6 3H11.4" stroke="#57573f" stroke-width="1.1"/><path d="M4 2.8V1H8V2.8" fill="none" stroke="#57573f" stroke-width=".9"/><path d="M4.4 5V9.8M6 5V9.8M7.6 5V9.8" stroke="#6e6e55" stroke-width=".8"/></svg>
<div class="t dis" style="left:138.0px;top:95.7px;">删除</div>
<svg class="a" style="left:163.0px;top:94.6px" width="11.0" height="11.0" viewBox="0 0 12 12" preserveAspectRatio="none"><circle cx="5" cy="3" r="2.3" fill="#5d6c9c"/><path d="M4 5H6V7H4Z" fill="#8a8f9c"/><path d="M1 7H9Q10 7 10 8V10.6H1Z" fill="#f1efe8" stroke="#8d8a7c" stroke-width=".8"/><circle cx="8.6" cy="9" r="2.4" fill="#eef6ee" stroke="#8aa08a" stroke-width=".6"/><path d="M7.4 9L8.4 10L9.9 8" fill="none" stroke="#46a85a" stroke-width=".9"/></svg>
<div class="t dis" style="left:176.0px;top:95.7px;">审核</div>
<svg class="a" style="left:201.0px;top:94.4px" width="11.0" height="11.6" viewBox="0 0 12 12" preserveAspectRatio="none"><circle cx="5.4" cy="3" r="2.3" fill="none" stroke="#2f9a86" stroke-width="1"/><path d="M4.2 5.2L3 8.4H7.8L6.6 5.2" fill="none" stroke="#2f9a86" stroke-width="1"/><path d="M1.4 10.4H8" stroke="#2f9a86" stroke-width="1.4"/><path d="M7.6 8L11.2 11.4" stroke="#3a7f74" stroke-width="1"/><path d="M11.4 11.6L9.4 11.2L11 9.6Z" fill="#3a7f74"/></svg>
<div class="t dis" style="left:214.0px;top:95.7px;">反审</div>
<svg class="a" style="left:244.0px;top:94.8px" width="11.4" height="11.4" viewBox="0 0 12 12" preserveAspectRatio="none"><path d="M1.8 6.6A4.3 4.3 0 0 1 9.2 3.2" fill="none" stroke="#3c5552" stroke-width="2.3"/><path d="M10.2 5.4A4.3 4.3 0 0 1 2.8 8.8" fill="none" stroke="#3c5552" stroke-width="2.3"/><path d="M7.2 4.8L11.2 5L10.6 0.8Z" fill="#3c5552"/><path d="M4.8 7.2L0.8 7L1.4 11.2Z" fill="#3c5552"/><path d="M2.6 5.2A3.8 3.8 0 0 1 7 2.4" fill="none" stroke="#5f9d97" stroke-width=".8"/><path d="M9.4 6.8A3.8 3.8 0 0 1 5 9.6" fill="none" stroke="#5f9d97" stroke-width=".8"/></svg>
<div class="t dis" style="left:258.5px;top:95.7px;">刷新</div>
<svg class="a" style="left:283.0px;top:94.6px" width="12.0" height="12.0" viewBox="0 0 12 12" preserveAspectRatio="none"><path d="M5.2 3.2L1.6 6L5.2 8.8Z" fill="#cfe4dc" stroke="#6a9c8a" stroke-width=".9"/><path d="M10.2 3.2L6.6 6L10.2 8.8Z" fill="#cfe4dc" stroke="#6a9c8a" stroke-width=".9"/></svg>
<div class="t dis" style="left:296.5px;top:95.7px;">上一单</div>
<svg class="a" style="left:330.0px;top:94.6px" width="12.0" height="12.0" viewBox="0 0 12 12" preserveAspectRatio="none"><path d="M1.8 3.2L5.4 6L1.8 8.8Z" fill="#cfe4dc" stroke="#6a9c8a" stroke-width=".9"/><path d="M6.8 3.2L10.4 6L6.8 8.8Z" fill="#cfe4dc" stroke="#6a9c8a" stroke-width=".9"/></svg>
<div class="t dis" style="left:344.0px;top:95.7px;">下一单</div>
<svg class="a" style="left:377.0px;top:94.8px" width="10.6" height="11.2" viewBox="0 0 12 12" preserveAspectRatio="none"><rect x="0.8" y="0.4" width="10.4" height="11.2" rx="1.4" fill="#5aaef0"/><path d="M2.4 3H5.4M2.4 5.6H4.6M2.4 8.2H4" stroke="#eaf4fe" stroke-width="1"/><circle cx="7.6" cy="4.8" r="1.9" fill="none" stroke="#fff" stroke-width=".9"/><path d="M6.4 6.4L4.8 9.4M8.6 6.6L9.6 9.4" stroke="#fff" stroke-width=".9"/></svg>
<div class="t en" style="left:390.0px;top:95.7px;">单据查询</div>
<svg class="a" style="left:433.0px;top:94.4px" width="12.0" height="12.0" viewBox="0 0 12 12" preserveAspectRatio="none"><circle cx="6" cy="6" r="5" fill="#fdf3ee" stroke="#e4481f" stroke-width="1.3"/><text x="6" y="9" font-size="8.4" font-weight="bold" fill="#e4481f" text-anchor="middle" font-family="'Liberation Sans',sans-serif">?</text></svg>
<div class="t en" style="left:446.0px;top:95.7px;">帮助</div>
<svg class="a" style="left:472.3px;top:95.0px" width="10.6" height="10.4" viewBox="0 0 12 12" preserveAspectRatio="none"><path d="M1 1L11 11M11 1L1 11" stroke="#1a1a1a" stroke-width="1.5"/></svg>
<div class="t en" style="left:485.5px;top:95.7px;font-weight:normal;">关闭</div>
<div class="a" style="left:237.6px;top:92.6px;width:1px;height:16px;background:#a3bde8"></div><div class="a" style="left:238.6px;top:92.6px;width:1.2px;height:16px;background:#d0def6"></div>
<div class="a" style="left:6.5px;top:116px;width:1186px;height:98px;background:#fff;border:1px solid #6e7f9c;border-right-color:#8e9bb3"></div>
<div class="a" style="left:7.5px;top:116.8px;width:1184px;height:32.2px;background:#ffffe1;border-bottom:1px solid #b9b79c"></div>
<div class="t" style="left:37.8px;top:121.9px;letter-spacing:1.3px;font:bold 14.9px/20px 'Liberation Serif','Noto Serif CJK SC',serif;color:#1e8f1e;-webkit-text-stroke:0">工艺路线</div>
<svg class="a" style="left:165px;top:117px" width="78" height="30" viewBox="165 117 78 30"><rect x="183" y="120.9" width="57" height="23.7" rx="3.2" fill="#6b6b6b"/><path d="M174.2 118.9H184.6Q186.4 122.6 189.7 123.4V132Q189.7 140.6 179 145.8Q166.6 140.6 166.6 132V123.4Q171.6 122.6 174.2 118.9Z" fill="#6b6b6b"/><path d="M175.6 121H183.4Q185 124 187.6 124.9V132Q187.6 139 179 143.5Q169.7 139 169.7 132V124.9Q173.4 124 175.6 121Z" fill="#fdfde2"/><text x="179.5" y="136.7" font-size="13" font-weight="bold" fill="#6b6b6b" text-anchor="middle" font-family="'Liberation Sans','Noto Sans CJK SC',sans-serif">审</text><text x="215.6" y="137.2" font-size="13.5" fill="#fdfde2" text-anchor="middle" font-family="'Liberation Sans','Noto Sans CJK SC',sans-serif">待审核</text></svg>
<div class="a" style="left:418.8px;top:118.6px;width:57px;height:11.2px;background:#008000;color:#fff;text-align:center;line-height:12.4px;overflow:hidden">单据日期</div>
<div class="a" style="left:478px;top:118.6px;width:112.7px;height:11.2px;background:#0000ff;color:#fff;text-align:center;line-height:12.4px;overflow:hidden">单据编号</div>
<div class="a" style="left:418.8px;top:131px;width:57px;height:14.6px;background:#ffffe1;border:1px solid #4a4a4a;box-shadow:inset 1px 1px 0 #a5a59a,1.3px 1.3px 0 #8b8b80;overflow:hidden"><span style="position:absolute;left:0.2px;top:-1.2px;font-size:10.8px;line-height:12px;white-space:nowrap;transform:scaleX(.855);transform-origin:0 0;color:#111">2026-01-27</span></div>
<div class="a" style="left:479.2px;top:132px;width:112.4px;height:14px;background:#fff;border:1px solid #4a4a4a;box-shadow:inset 1px 1px 0 #a5a5a5,1.3px 1.3px 0 #8b8b80;overflow:hidden"><span style="position:absolute;left:0.3px;top:-1.1px;font-size:9.8px;line-height:12px;white-space:nowrap;transform:scaleX(.935);transform-origin:0 0;color:#111">GY202601270001</span></div>
<div class="t" style="left:19px;top:166.6px">拟定人<span style="margin-left:1.2px">:</span></div><div class="a" style="left:54px;top:176px;width:67.5px;height:1px;background:#333"></div>
<div class="a" style="left:124px;top:162.7px;width:15px;height:14.3px;border:1px solid #adb6c3;border-radius:1.5px;background:linear-gradient(#f3f5f8,#dfe3e9)"></div>
<svg class="a" style="left:126.5px;top:164.5px" width="10" height="11" viewBox="0 0 10 11"><circle cx="5" cy="3.2" r="2" fill="none" stroke="#4aa0e6" stroke-width=".9"/><path d="M1.4 9.6Q1.4 6 5 6Q8.6 6 8.6 9.6Z" fill="#d5dde6" stroke="#4aa0e6" stroke-width=".9"/></svg>
<div class="a" style="left:196.3px;top:165px;width:11px;height:11px;border:1px solid #3a3a3a;border-right-color:#a9a9a9;border-bottom-color:#a9a9a9;background:#fff"></div>
<svg class="a" style="left:197.5px;top:166.2px" width="9" height="9" viewBox="0 0 9 9"><path d="M1.2 4.2L3.4 6.8L7.6 1.4" stroke="#111" stroke-width="1.7" fill="none"/></svg>
<div class="t" style="left:212px;top:166.6px">严格工序流程</div>
<div class="t" style="left:345px;top:166.6px">制单<span style="margin-left:1.2px">:</span></div><div class="t" style="left:373.7px;top:164.5px">管理员</div><div class="a" style="left:373.7px;top:176px;width:67.5px;height:1px;background:#333"></div>
<div class="t" style="left:493.7px;top:166.6px">审核<span style="margin-left:1.2px">:</span></div><div class="a" style="left:522.5px;top:176px;width:67.5px;height:1px;background:#333"></div>
<div class="t" style="left:19px;top:196px">备注<span style="margin-left:1.2px">:</span></div><div class="a" style="left:44.5px;top:205.8px;width:545.5px;height:1px;background:#333"></div>
<div class="a" style="left:8px;top:220.8px;width:285.5px;height:395px;border:1px solid #e2e6ec;border-right-color:#e6e9ee;border-bottom-color:#e6e9ee"></div>
<div class="t" style="left:12.6px;top:216.2px;background:#7da7e0;padding:0 1.4px">适用范围<span style="margin:0 1px">(</span>双击选择<span style="margin-left:1px">)</span></div>
<div class="a" style="left:12px;top:230px;width:276.2px;height:380.5px;background:#fff;border:0.8px solid #5b6473;border-right-color:#6d6d6d;border-bottom-color:#6b7486"></div>
<svg class="a" style="left:12.70px;top:230.80px" width="262.80" height="379.48" viewBox="0 0 262.80 379.48"><defs><linearGradient id="bd12" x1="0" y1="0" x2="0" y2="1"><stop offset="0" stop-color="#9bbbea"/><stop offset=".45" stop-color="#7ba5e1"/><stop offset="1" stop-color="#7ba5e1"/></linearGradient></defs><rect x="0" y="0" width="261.80" height="15.40" fill="#aecbf0"/><rect x="258.50" y="0" width="3.30" height="17.70" fill="#aecbf0"/><rect x="0" y="15.40" width="258.50" height="2.90" fill="url(#bd12)"/><rect x="24.15" y="0" width="1.1" height="15.40" fill="#97b8ea"/><rect x="105.35" y="0" width="1.1" height="15.40" fill="#97b8ea"/><rect x="257.95" y="0" width="1.1" height="15.40" fill="#97b8ea"/><rect x="24.70" y="36.10" width="233.80" height="18.02" fill="#f5faff"/><rect x="24.70" y="72.14" width="233.80" height="18.02" fill="#f5faff"/><rect x="24.70" y="108.18" width="233.80" height="18.02" fill="#f5faff"/><rect x="24.70" y="144.22" width="233.80" height="18.02" fill="#f5faff"/><rect x="24.70" y="180.26" width="233.80" height="18.02" fill="#f5faff"/><rect x="24.70" y="216.30" width="233.80" height="18.02" fill="#f5faff"/><rect x="24.70" y="252.34" width="233.80" height="18.02" fill="#f5faff"/><rect x="24.70" y="288.38" width="233.80" height="18.02" fill="#f5faff"/><rect x="24.70" y="324.42" width="233.80" height="18.02" fill="#f5faff"/><rect x="24.70" y="360.46" width="233.80" height="18.02" fill="#f5faff"/><rect x="0" y="35.70" width="258.50" height="0.8" fill="#9ab8ea"/><rect x="0" y="53.72" width="258.50" height="0.8" fill="#9ab8ea"/><rect x="0" y="71.74" width="258.50" height="0.8" fill="#9ab8ea"/><rect x="0" y="89.76" width="258.50" height="0.8" fill="#9ab8ea"/><rect x="0" y="107.78" width="258.50" height="0.8" fill="#9ab8ea"/><rect x="0" y="125.80" width="258.50" height="0.8" fill="#9ab8ea"/><rect x="0" y="143.82" width="258.50" height="0.8" fill="#9ab8ea"/><rect x="0" y="161.84" width="258.50" height="0.8" fill="#9ab8ea"/><rect x="0" y="179.86" width="258.50" height="0.8" fill="#9ab8ea"/><rect x="0" y="197.88" width="258.50" height="0.8" fill="#9ab8ea"/><rect x="0" y="215.90" width="258.50" height="0.8" fill="#9ab8ea"/><rect x="0" y="233.92" width="258.50" height="0.8" fill="#9ab8ea"/><rect x="0" y="251.94" width="258.50" height="0.8" fill="#9ab8ea"/><rect x="0" y="269.96" width="258.50" height="0.8" fill="#9ab8ea"/><rect x="0" y="287.98" width="258.50" height="0.8" fill="#9ab8ea"/><rect x="0" y="306.00" width="258.50" height="0.8" fill="#9ab8ea"/><rect x="0" y="324.02" width="258.50" height="0.8" fill="#9ab8ea"/><rect x="0" y="342.04" width="258.50" height="0.8" fill="#9ab8ea"/><rect x="0" y="360.06" width="258.50" height="0.8" fill="#9ab8ea"/><rect x="0" y="378.08" width="258.50" height="0.8" fill="#9ab8ea"/><rect x="24.20" y="18.30" width="1" height="360.18" fill="#9ab8ea"/><rect x="105.40" y="18.30" width="1" height="360.18" fill="#9ab8ea"/><rect x="258.00" y="18.30" width="1" height="360.18" fill="#9ab8ea"/></svg>
<div class="t" style="left:37.4px;top:235.4px;width:81.2px;text-align:center">产品编号</div>
<div class="t" style="left:118.6px;top:235.4px;width:152.6px;text-align:center">产品名称</div>
<div class="t" style="left:13.3px;top:253.40px;width:24.7px;text-align:center;font-size:10px;line-height:12px;-webkit-text-stroke:0.12px currentColor;text-rendering:geometricPrecision;color:#2626ff">1</div>
<div class="t" style="left:13.3px;top:271.31px;width:24.7px;text-align:center;font-size:10px;line-height:12px;-webkit-text-stroke:0.12px currentColor;text-rendering:geometricPrecision;color:#2626ff">2</div>
<div class="t" style="left:13.3px;top:289.33px;width:24.7px;text-align:center;font-size:10px;line-height:12px;-webkit-text-stroke:0.12px currentColor;text-rendering:geometricPrecision;color:#2626ff">3</div>
<div class="t" style="left:13.3px;top:307.35px;width:24.7px;text-align:center;font-size:10px;line-height:12px;-webkit-text-stroke:0.12px currentColor;text-rendering:geometricPrecision;color:#2626ff">4</div>
<div class="t" style="left:13.3px;top:325.37px;width:24.7px;text-align:center;font-size:10px;line-height:12px;-webkit-text-stroke:0.12px currentColor;text-rendering:geometricPrecision;color:#2626ff">5</div>
<div class="t" style="left:13.3px;top:343.39px;width:24.7px;text-align:center;font-size:10px;line-height:12px;-webkit-text-stroke:0.12px currentColor;text-rendering:geometricPrecision;color:#2626ff">6</div>
<div class="t" style="left:13.3px;top:361.41px;width:24.7px;text-align:center;font-size:10px;line-height:12px;-webkit-text-stroke:0.12px currentColor;text-rendering:geometricPrecision;color:#2626ff">7</div>
<div class="t" style="left:13.3px;top:379.43px;width:24.7px;text-align:center;font-size:10px;line-height:12px;-webkit-text-stroke:0.12px currentColor;text-rendering:geometricPrecision;color:#2626ff">8</div>
<div class="t" style="left:13.3px;top:397.45px;width:24.7px;text-align:center;font-size:10px;line-height:12px;-webkit-text-stroke:0.12px currentColor;text-rendering:geometricPrecision;color:#2626ff">9</div>
<div class="t" style="left:13.3px;top:415.47px;width:24.7px;text-align:center;font-size:10px;line-height:12px;-webkit-text-stroke:0.12px currentColor;text-rendering:geometricPrecision;color:#2626ff">10</div>
<div class="t" style="left:13.3px;top:433.49px;width:24.7px;text-align:center;font-size:10px;line-height:12px;-webkit-text-stroke:0.12px currentColor;text-rendering:geometricPrecision;color:#2626ff">11</div>
<div class="t" style="left:13.3px;top:451.51px;width:24.7px;text-align:center;font-size:10px;line-height:12px;-webkit-text-stroke:0.12px currentColor;text-rendering:geometricPrecision;color:#2626ff">12</div>
<div class="t" style="left:13.3px;top:469.53px;width:24.7px;text-align:center;font-size:10px;line-height:12px;-webkit-text-stroke:0.12px currentColor;text-rendering:geometricPrecision;color:#2626ff">13</div>
<div class="t" style="left:13.3px;top:487.55px;width:24.7px;text-align:center;font-size:10px;line-height:12px;-webkit-text-stroke:0.12px currentColor;text-rendering:geometricPrecision;color:#2626ff">14</div>
<div class="t" style="left:13.3px;top:505.57px;width:24.7px;text-align:center;font-size:10px;line-height:12px;-webkit-text-stroke:0.12px currentColor;text-rendering:geometricPrecision;color:#2626ff">15</div>
<div class="t" style="left:13.3px;top:523.59px;width:24.7px;text-align:center;font-size:10px;line-height:12px;-webkit-text-stroke:0.12px currentColor;text-rendering:geometricPrecision;color:#2626ff">16</div>
<div class="t" style="left:13.3px;top:541.61px;width:24.7px;text-align:center;font-size:10px;line-height:12px;-webkit-text-stroke:0.12px currentColor;text-rendering:geometricPrecision;color:#2626ff">17</div>
<div class="t" style="left:13.3px;top:559.63px;width:24.7px;text-align:center;font-size:10px;line-height:12px;-webkit-text-stroke:0.12px currentColor;text-rendering:geometricPrecision;color:#2626ff">18</div>
<div class="t" style="left:13.3px;top:577.65px;width:24.7px;text-align:center;font-size:10px;line-height:12px;-webkit-text-stroke:0.12px currentColor;text-rendering:geometricPrecision;color:#2626ff">19</div>
<div class="t" style="left:13.3px;top:595.67px;width:24.7px;text-align:center;font-size:10px;line-height:12px;-webkit-text-stroke:0.12px currentColor;text-rendering:geometricPrecision;color:#2626ff">20</div>
<div class="a" style="left:274.6px;top:230.8px;width:12.5px;height:379.2px;background:#f8f8f8"></div>
<div class="a" style="left:274.6px;top:243.3px;width:12.5px;height:227.2px;background:#f0f0f0;border:1px solid #fff;border-right-color:#696969;border-bottom-color:#696969;box-shadow:inset -1px -1px 0 #a3a3a3"></div>
<div class="a" style="left:274.6px;top:230.8px;width:12.5px;height:12.5px;background:#f0f0f0;border:1px solid #fff;border-right-color:#696969;border-bottom-color:#696969;box-shadow:inset -1px -1px 0 #a3a3a3"></div>
<div class="a" style="left:274.6px;top:597.5px;width:12.5px;height:12.5px;background:#f0f0f0;border:1px solid #fff;border-right-color:#696969;border-bottom-color:#696969;box-shadow:inset -1px -1px 0 #a3a3a3"></div>
<svg class="a" style="left:277.7px;top:235.0px" width="6" height="4" viewBox="0 0 6 4"><path d="M0 3.6H6L3 0.4Z" fill="#000"/></svg>
<svg class="a" style="left:277.7px;top:601.9px" width="6" height="4" viewBox="0 0 6 4"><path d="M0 0.4H6L3 3.6Z" fill="#000"/></svg>
<div class="a" style="left:287.1px;top:230.8px;width:0.9px;height:379.2px;background:#6d6d6d"></div>
<div class="a" style="left:300px;top:220px;width:891.2px;height:392.2px;background:#fff;border:0.8px solid #5b6473;border-right-color:#8e9bb3;border-bottom-color:#8e9bb3"></div>
<svg class="a" style="left:300.70px;top:220.80px" width="878.50" height="379.48" viewBox="0 0 878.50 379.48"><defs><linearGradient id="bd300" x1="0" y1="0" x2="0" y2="1"><stop offset="0" stop-color="#9bbbea"/><stop offset=".45" stop-color="#7ba5e1"/><stop offset="1" stop-color="#7ba5e1"/></linearGradient></defs><rect x="0" y="0" width="877.50" height="15.90" fill="#aecbf0"/><rect x="521.80" y="0" width="355.70" height="18.00" fill="#aecbf0"/><rect x="0" y="15.90" width="521.80" height="2.70" fill="url(#bd300)"/><rect x="22.05" y="0" width="1.1" height="15.90" fill="#97b8ea"/><rect x="115.05" y="0" width="1.1" height="15.90" fill="#97b8ea"/><rect x="196.25" y="0" width="1.1" height="15.90" fill="#97b8ea"/><rect x="259.55" y="0" width="1.1" height="15.90" fill="#97b8ea"/><rect x="324.95" y="0" width="1.1" height="15.90" fill="#97b8ea"/><rect x="376.95" y="0" width="1.1" height="15.90" fill="#97b8ea"/><rect x="474.25" y="0" width="1.1" height="15.90" fill="#97b8ea"/><rect x="521.25" y="0" width="1.1" height="15.90" fill="#97b8ea"/><rect x="0" y="18.60" width="521.80" height="17.50" fill="#3a86ee"/><rect x="22.60" y="36.10" width="499.20" height="18.02" fill="#f5faff"/><rect x="22.60" y="72.14" width="499.20" height="18.02" fill="#f5faff"/><rect x="22.60" y="108.18" width="499.20" height="18.02" fill="#f5faff"/><rect x="22.60" y="144.22" width="499.20" height="18.02" fill="#f5faff"/><rect x="22.60" y="180.26" width="499.20" height="18.02" fill="#f5faff"/><rect x="22.60" y="216.30" width="499.20" height="18.02" fill="#f5faff"/><rect x="22.60" y="252.34" width="499.20" height="18.02" fill="#f5faff"/><rect x="22.60" y="288.38" width="499.20" height="18.02" fill="#f5faff"/><rect x="22.60" y="324.42" width="499.20" height="18.02" fill="#f5faff"/><rect x="22.60" y="360.46" width="499.20" height="18.02" fill="#f5faff"/><rect x="0" y="53.72" width="521.80" height="0.8" fill="#9ab8ea"/><rect x="0" y="71.74" width="521.80" height="0.8" fill="#9ab8ea"/><rect x="0" y="89.76" width="521.80" height="0.8" fill="#9ab8ea"/><rect x="0" y="107.78" width="521.80" height="0.8" fill="#9ab8ea"/><rect x="0" y="125.80" width="521.80" height="0.8" fill="#9ab8ea"/><rect x="0" y="143.82" width="521.80" height="0.8" fill="#9ab8ea"/><rect x="0" y="161.84" width="521.80" height="0.8" fill="#9ab8ea"/><rect x="0" y="179.86" width="521.80" height="0.8" fill="#9ab8ea"/><rect x="0" y="197.88" width="521.80" height="0.8" fill="#9ab8ea"/><rect x="0" y="215.90" width="521.80" height="0.8" fill="#9ab8ea"/><rect x="0" y="233.92" width="521.80" height="0.8" fill="#9ab8ea"/><rect x="0" y="251.94" width="521.80" height="0.8" fill="#9ab8ea"/><rect x="0" y="269.96" width="521.80" height="0.8" fill="#9ab8ea"/><rect x="0" y="287.98" width="521.80" height="0.8" fill="#9ab8ea"/><rect x="0" y="306.00" width="521.80" height="0.8" fill="#9ab8ea"/><rect x="0" y="324.02" width="521.80" height="0.8" fill="#9ab8ea"/><rect x="0" y="342.04" width="521.80" height="0.8" fill="#9ab8ea"/><rect x="0" y="360.06" width="521.80" height="0.8" fill="#9ab8ea"/><rect x="0" y="378.08" width="521.80" height="0.8" fill="#9ab8ea"/><rect x="22.10" y="18.60" width="1" height="359.88" fill="#9ab8ea"/><rect x="115.10" y="18.60" width="1" height="359.88" fill="#9ab8ea"/><rect x="196.30" y="18.60" width="1" height="359.88" fill="#9ab8ea"/><rect x="259.60" y="18.60" width="1" height="359.88" fill="#9ab8ea"/><rect x="325.00" y="18.60" width="1" height="359.88" fill="#9ab8ea"/><rect x="377.00" y="18.60" width="1" height="359.88" fill="#9ab8ea"/><rect x="474.30" y="18.60" width="1" height="359.88" fill="#9ab8ea"/><rect x="521.30" y="18.60" width="1" height="359.88" fill="#9ab8ea"/><rect x="22.10" y="18.60" width="1" height="17.50" fill="#62a0f3"/><rect x="115.10" y="18.60" width="1" height="17.50" fill="#62a0f3"/><rect x="196.30" y="18.60" width="1" height="17.50" fill="#62a0f3"/><rect x="259.60" y="18.60" width="1" height="17.50" fill="#62a0f3"/><rect x="325.00" y="18.60" width="1" height="17.50" fill="#62a0f3"/><rect x="377.00" y="18.60" width="1" height="17.50" fill="#62a0f3"/><rect x="474.30" y="18.60" width="1" height="17.50" fill="#62a0f3"/></svg>
<div class="t" style="left:323.3px;top:225.7px;width:93.0px;text-align:center">工序名称</div>
<div class="t" style="left:416.3px;top:225.7px;width:81.2px;text-align:center">生产工</div>
<div class="t" style="left:497.5px;top:225.7px;width:63.3px;text-align:center">标准工时</div>
<div class="t" style="left:560.8px;top:225.7px;width:65.4px;text-align:center">工序计件单价</div>
<div class="t" style="left:626.2px;top:225.7px;width:52.0px;text-align:center">超交比例%</div>
<div class="t" style="left:678.2px;top:225.7px;width:97.3px;text-align:center">备注</div>
<div class="t" style="left:775.5px;top:225.7px;width:47.0px;text-align:center">顺序</div>
<div class="t" style="left:301.3px;top:243.55px;width:22.6px;text-align:center;font-size:10px;line-height:12px;-webkit-text-stroke:0.12px currentColor;text-rendering:geometricPrecision;color:#fff">1</div>
<div class="t" style="left:560.8px;top:244.25px;width:64.4px;text-align:right;font-size:10.2px;letter-spacing:-0.45px;line-height:12px;text-rendering:geometricPrecision;color:#cfe0fb">0.00</div>
<div class="t" style="left:301.3px;top:261.31px;width:22.6px;text-align:center;font-size:10px;line-height:12px;-webkit-text-stroke:0.12px currentColor;text-rendering:geometricPrecision;color:#2626ff">2</div>
<div class="t" style="left:560.8px;top:262.01px;width:64.4px;text-align:right;font-size:10.2px;letter-spacing:-0.45px;line-height:12px;text-rendering:geometricPrecision;color:#333">0.00</div>
<div class="t" style="left:301.3px;top:279.33px;width:22.6px;text-align:center;font-size:10px;line-height:12px;-webkit-text-stroke:0.12px currentColor;text-rendering:geometricPrecision;color:#2626ff">3</div>
<div class="t" style="left:560.8px;top:280.03px;width:64.4px;text-align:right;font-size:10.2px;letter-spacing:-0.45px;line-height:12px;text-rendering:geometricPrecision;color:#333">0.00</div>
<div class="t" style="left:301.3px;top:297.35px;width:22.6px;text-align:center;font-size:10px;line-height:12px;-webkit-text-stroke:0.12px currentColor;text-rendering:geometricPrecision;color:#2626ff">4</div>
<div class="t" style="left:560.8px;top:298.05px;width:64.4px;text-align:right;font-size:10.2px;letter-spacing:-0.45px;line-height:12px;text-rendering:geometricPrecision;color:#333">0.00</div>
<div class="t" style="left:301.3px;top:315.37px;width:22.6px;text-align:center;font-size:10px;line-height:12px;-webkit-text-stroke:0.12px currentColor;text-rendering:geometricPrecision;color:#2626ff">5</div>
<div class="t" style="left:560.8px;top:316.07px;width:64.4px;text-align:right;font-size:10.2px;letter-spacing:-0.45px;line-height:12px;text-rendering:geometricPrecision;color:#333">0.00</div>
<div class="t" style="left:301.3px;top:333.39px;width:22.6px;text-align:center;font-size:10px;line-height:12px;-webkit-text-stroke:0.12px currentColor;text-rendering:geometricPrecision;color:#2626ff">6</div>
<div class="t" style="left:560.8px;top:334.09px;width:64.4px;text-align:right;font-size:10.2px;letter-spacing:-0.45px;line-height:12px;text-rendering:geometricPrecision;color:#333">0.00</div>
<div class="t" style="left:301.3px;top:351.41px;width:22.6px;text-align:center;font-size:10px;line-height:12px;-webkit-text-stroke:0.12px currentColor;text-rendering:geometricPrecision;color:#2626ff">7</div>
<div class="t" style="left:560.8px;top:352.11px;width:64.4px;text-align:right;font-size:10.2px;letter-spacing:-0.45px;line-height:12px;text-rendering:geometricPrecision;color:#333">0.00</div>
<div class="t" style="left:301.3px;top:369.43px;width:22.6px;text-align:center;font-size:10px;line-height:12px;-webkit-text-stroke:0.12px currentColor;text-rendering:geometricPrecision;color:#2626ff">8</div>
<div class="t" style="left:560.8px;top:370.13px;width:64.4px;text-align:right;font-size:10.2px;letter-spacing:-0.45px;line-height:12px;text-rendering:geometricPrecision;color:#333">0.00</div>
<div class="t" style="left:301.3px;top:387.45px;width:22.6px;text-align:center;font-size:10px;line-height:12px;-webkit-text-stroke:0.12px currentColor;text-rendering:geometricPrecision;color:#2626ff">9</div>
<div class="t" style="left:560.8px;top:388.15px;width:64.4px;text-align:right;font-size:10.2px;letter-spacing:-0.45px;line-height:12px;text-rendering:geometricPrecision;color:#333">0.00</div>
<div class="t" style="left:301.3px;top:405.47px;width:22.6px;text-align:center;font-size:10px;line-height:12px;-webkit-text-stroke:0.12px currentColor;text-rendering:geometricPrecision;color:#2626ff">10</div>
<div class="t" style="left:560.8px;top:406.17px;width:64.4px;text-align:right;font-size:10.2px;letter-spacing:-0.45px;line-height:12px;text-rendering:geometricPrecision;color:#333">0.00</div>
<div class="t" style="left:301.3px;top:423.49px;width:22.6px;text-align:center;font-size:10px;line-height:12px;-webkit-text-stroke:0.12px currentColor;text-rendering:geometricPrecision;color:#2626ff">11</div>
<div class="t" style="left:560.8px;top:424.19px;width:64.4px;text-align:right;font-size:10.2px;letter-spacing:-0.45px;line-height:12px;text-rendering:geometricPrecision;color:#333">0.00</div>
<div class="t" style="left:301.3px;top:441.51px;width:22.6px;text-align:center;font-size:10px;line-height:12px;-webkit-text-stroke:0.12px currentColor;text-rendering:geometricPrecision;color:#2626ff">12</div>
<div class="t" style="left:560.8px;top:442.21px;width:64.4px;text-align:right;font-size:10.2px;letter-spacing:-0.45px;line-height:12px;text-rendering:geometricPrecision;color:#333">0.00</div>
<div class="t" style="left:301.3px;top:459.53px;width:22.6px;text-align:center;font-size:10px;line-height:12px;-webkit-text-stroke:0.12px currentColor;text-rendering:geometricPrecision;color:#2626ff">13</div>
<div class="t" style="left:560.8px;top:460.23px;width:64.4px;text-align:right;font-size:10.2px;letter-spacing:-0.45px;line-height:12px;text-rendering:geometricPrecision;color:#333">0.00</div>
<div class="t" style="left:301.3px;top:477.55px;width:22.6px;text-align:center;font-size:10px;line-height:12px;-webkit-text-stroke:0.12px currentColor;text-rendering:geometricPrecision;color:#2626ff">14</div>
<div class="t" style="left:560.8px;top:478.25px;width:64.4px;text-align:right;font-size:10.2px;letter-spacing:-0.45px;line-height:12px;text-rendering:geometricPrecision;color:#333">0.00</div>
<div class="t" style="left:301.3px;top:495.57px;width:22.6px;text-align:center;font-size:10px;line-height:12px;-webkit-text-stroke:0.12px currentColor;text-rendering:geometricPrecision;color:#2626ff">15</div>
<div class="t" style="left:560.8px;top:496.27px;width:64.4px;text-align:right;font-size:10.2px;letter-spacing:-0.45px;line-height:12px;text-rendering:geometricPrecision;color:#333">0.00</div>
<div class="t" style="left:301.3px;top:513.59px;width:22.6px;text-align:center;font-size:10px;line-height:12px;-webkit-text-stroke:0.12px currentColor;text-rendering:geometricPrecision;color:#2626ff">16</div>
<div class="t" style="left:560.8px;top:514.29px;width:64.4px;text-align:right;font-size:10.2px;letter-spacing:-0.45px;line-height:12px;text-rendering:geometricPrecision;color:#333">0.00</div>
<div class="t" style="left:301.3px;top:531.61px;width:22.6px;text-align:center;font-size:10px;line-height:12px;-webkit-text-stroke:0.12px currentColor;text-rendering:geometricPrecision;color:#2626ff">17</div>
<div class="t" style="left:560.8px;top:532.31px;width:64.4px;text-align:right;font-size:10.2px;letter-spacing:-0.45px;line-height:12px;text-rendering:geometricPrecision;color:#333">0.00</div>
<div class="t" style="left:301.3px;top:549.63px;width:22.6px;text-align:center;font-size:10px;line-height:12px;-webkit-text-stroke:0.12px currentColor;text-rendering:geometricPrecision;color:#2626ff">18</div>
<div class="t" style="left:560.8px;top:550.33px;width:64.4px;text-align:right;font-size:10.2px;letter-spacing:-0.45px;line-height:12px;text-rendering:geometricPrecision;color:#333">0.00</div>
<div class="t" style="left:301.3px;top:567.65px;width:22.6px;text-align:center;font-size:10px;line-height:12px;-webkit-text-stroke:0.12px currentColor;text-rendering:geometricPrecision;color:#2626ff">19</div>
<div class="t" style="left:560.8px;top:568.35px;width:64.4px;text-align:right;font-size:10.2px;letter-spacing:-0.45px;line-height:12px;text-rendering:geometricPrecision;color:#333">0.00</div>
<div class="t" style="left:301.3px;top:585.67px;width:22.6px;text-align:center;font-size:10px;line-height:12px;-webkit-text-stroke:0.12px currentColor;text-rendering:geometricPrecision;color:#2626ff">20</div>
<div class="t" style="left:560.8px;top:586.37px;width:64.4px;text-align:right;font-size:10.2px;letter-spacing:-0.45px;line-height:12px;text-rendering:geometricPrecision;color:#333">0.00</div>
<div class="a" style="left:1178.4px;top:220.8px;width:12.8px;height:390.6px;background:#f8f8f8"></div>
<div class="a" style="left:1178.4px;top:233.6px;width:12.8px;height:243.8px;background:#f0f0f0;border:1px solid #fff;border-right-color:#696969;border-bottom-color:#696969;box-shadow:inset -1px -1px 0 #a3a3a3"></div>
<div class="a" style="left:1178.4px;top:220.8px;width:12.8px;height:12.8px;background:#f0f0f0;border:1px solid #fff;border-right-color:#696969;border-bottom-color:#696969;box-shadow:inset -1px -1px 0 #a3a3a3"></div>
<div class="a" style="left:1178.4px;top:598.6px;width:12.8px;height:12.8px;background:#f0f0f0;border:1px solid #fff;border-right-color:#696969;border-bottom-color:#696969;box-shadow:inset -1px -1px 0 #a3a3a3"></div>
<svg class="a" style="left:1181.6px;top:225.0px" width="6" height="4" viewBox="0 0 6 4"><path d="M0 3.6H6L3 0.4Z" fill="#000"/></svg>
<svg class="a" style="left:1181.6px;top:603.0px" width="6" height="4" viewBox="0 0 6 4"><path d="M0 0.4H6L3 3.6Z" fill="#000"/></svg>
<div class="a" style="left:0;top:621.2px;width:1200px;height:1.2px;background:#dedede"></div><div class="a" style="left:0;top:622.3px;width:1200px;height:0.9px;background:#a3a3a3"></div>
<div class="a" style="left:0;top:623.2px;width:1200px;height:12.8px;background:#7da7e0"></div>
<div class="a" style="left:1.4px;top:624px;width:1198px;height:1px;background:#8096be"></div>
<div class="a" style="left:1.4px;top:624px;width:1px;height:12px;background:#6f8fc4"></div>
<div class="a" style="left:81.6px;top:625px;width:1.2px;height:11px;background:#c5d8f5"></div><div class="a" style="left:82.8px;top:624.4px;width:1.2px;height:11.6px;background:#6f8fc4"></div>
<div class="a" style="left:269.1px;top:625px;width:1.2px;height:11px;background:#c5d8f5"></div><div class="a" style="left:271.2px;top:624.4px;width:1.2px;height:11.6px;background:#6f8fc4"></div>
<div class="a" style="left:548.0px;top:625px;width:1.2px;height:11px;background:#c5d8f5"></div><div class="a" style="left:550.8px;top:624.4px;width:1.2px;height:11.6px;background:#6f8fc4"></div>
<div class="a" style="left:729.8px;top:625px;width:1.2px;height:11px;background:#c5d8f5"></div><div class="a" style="left:732.0px;top:624.4px;width:1.2px;height:11.6px;background:#6f8fc4"></div>
<svg class="a" style="left:4.4px;top:624.6px" width="12" height="11.4" viewBox="0 0 12 11.4"><circle cx="3.4" cy="2.8" r="2.1" fill="#3f8ae6"/><path d="M0.4 10Q0.4 5.2 3.4 5.2Q6.4 5.2 6.4 10Z" fill="#2f7ad8"/><circle cx="2.8" cy="2.2" r=".8" fill="#a9d2fb"/><circle cx="8.4" cy="4" r="2.3" fill="#5cc52c"/><path d="M4.8 11.4Q4.8 6.6 8.4 6.6Q12 6.6 12 11.4Z" fill="#44ad1a"/><circle cx="7.8" cy="3.4" r=".9" fill="#c6f3a6"/></svg>
<div class="t" style="left:19px;top:625.8px">管理员</div>
<svg class="a" style="left:86px;top:624.8px" width="19" height="11.2" viewBox="0 0 19 11.2"><path d="M0.4 2.6L4.4 3.8L3.6 8.4L0.8 7.6L2 5.2Z" fill="#f3c23a"/><path d="M18.6 2.6L14.6 3.8L15.4 8.4L18.2 7.6L17 5.2Z" fill="#f3c23a"/><ellipse cx="9.5" cy="5.8" rx="6.8" ry="5.2" fill="#f0b429"/><ellipse cx="9.5" cy="5.8" rx="5.4" ry="3.9" fill="#d9201c"/><ellipse cx="9.5" cy="4.6" rx="4" ry="1.6" fill="#ec4a42"/><text x="9.5" y="7.3" font-size="4.2" font-weight="bold" fill="#ffe9a8" text-anchor="middle" font-family="'Liberation Sans',sans-serif">VIP</text></svg>
<svg class="a" style="left:273px;top:624px" width="15" height="12" viewBox="0 0 15 12"><rect x="9.4" y="3.8" width="4.8" height="8.2" fill="#f39a2a"/><path d="M10.2 5.4H13.4M10.2 7H13.4" stroke="#fbc16a" stroke-width=".6"/><circle cx="5.8" cy="7" r="4.6" fill="#ffeb82"/><path d="M0.8 6.6Q0.2 1 5.6 0.4Q10.4 0.2 10.2 4.4Q8 2.8 5.4 3.6Q3 4.4 2.4 7.6Z" fill="#7a3d1c"/><circle cx="4.6" cy="6.4" r=".7" fill="#2f5fb0"/><circle cx="7.6" cy="6.4" r=".7" fill="#2f5fb0"/><ellipse cx="6" cy="9.6" rx="1.4" ry=".6" fill="#f02a5a"/></svg>
<svg class="a" style="left:553px;top:624.4px" width="11" height="11.6" viewBox="0 0 11 11.6"><circle cx="5.5" cy="5.8" r="5.3" fill="#d4dce8" stroke="#9aa8bd" stroke-width=".5"/><circle cx="5.5" cy="5.8" r="4.1" fill="#2f8fe6"/><path d="M1.6 6.6A4 4 0 0 0 9.4 6.6Z" fill="#5cc0f5"/><path d="M7.8 3.2L5 5.2L6 6.4Z" fill="#e8262a"/><path d="M3.2 8.4L5 5.2L6 6.4Z" fill="#f4f6fa"/></svg>
<div class="t" style="left:567.5px;top:625.8px;letter-spacing:-0.35px">2026年1月27日</div><div class="t" style="left:635px;top:625.8px">星期二</div>
<div class="t" style="left:676.5px;top:625.8px;letter-spacing:0.1px;-webkit-text-stroke:0">10:39:16</div>
<svg class="a" style="left:733px;top:624.6px" width="14" height="11.4" viewBox="0 0 14 11.4"><path d="M0.4 6.2L7 0.6L13.6 6.2L12.4 7.4L7 2.8L1.6 7.4Z" fill="#e2572a"/><path d="M2.6 6.6L7 3L11.4 6.6V11.4H2.6Z" fill="#f6ead0"/><rect x="5.6" y="7.4" width="2.8" height="4" fill="#c77b2e"/><rect x="10" y="1.4" width="1.6" height="3" fill="#b5532a"/></svg>
<div class="t" style="left:749px;top:625.8px;color:#1414ff">版本号:<span style="font-family:'Liberation Mono',monospace;letter-spacing:-0.4px"> 10.3 </span>单机版</div>
</body></html>
